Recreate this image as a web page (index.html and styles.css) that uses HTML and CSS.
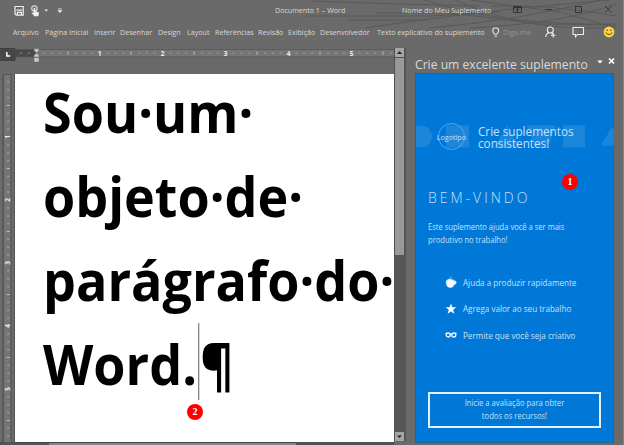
FILE: index.html
```html
<!DOCTYPE html>
<html lang="pt-BR">
<head>
<meta charset="utf-8">
<title>Documento 1 – Word</title>
<link rel="stylesheet" href="styles.css">
</head>
<body>
<div class="window">
  <header class="chrome">
    <svg class="swirl" width="624" height="48" viewBox="0 0 624 48">
      <g fill="none" stroke="#595959" stroke-width="1">
        <path d="M311 1L400 4L480 6"/><path d="M305 16H430L500 12"/><path d="M347 20L430 20"/>
        <path d="M365 28L420 20L520 8L610 0"/><path d="M376 13L450 13L540 24L616 25"/>
        <path d="M425 0Q500 26 616 24"/><path d="M455 0Q530 34 616 27"/><path d="M470 0L560 12L616 28"/>
        <path d="M430 28Q520 20 600 0"/><path d="M470 28Q560 24 616 4"/><path d="M490 6Q550 4 616 16"/>
      </g>
    </svg>
    <div class="titlebar">
      <div class="quick">
        <svg width="50" height="14" viewBox="0 0 50 14">
          <path d="M1 1.5h8.2v8.7H2.2L1 9z" fill="none" stroke="#f0f0f0" stroke-width="1.2"/>
          <path d="M2.5 5.2h5.6M3.4 10V7.4h4V10" fill="none" stroke="#f0f0f0" stroke-width="1.3"/>
          <circle cx="20.4" cy="3.6" r="2.7" fill="none" stroke="#d5d5d5" stroke-width="1.2"/>
          <path d="M19.6 3.2q.9-.9 1.7 0v3l3 .9q.8.4.6 1.4l-.6 2.8h-3.8l-2.9-3 .5-.7 1.5.6z" fill="#f0f0f0"/>
          <path d="M30.3 4.6h3.8l-1.9 2z" fill="#eee"/>
          <path d="M44 3.8h3.8M44 5.4h3.8l-1.9 2.2z" fill="#eee" stroke="#eee" stroke-width=".7"/>
        </svg>
      </div>
      <span class="label doc-name">Documento 1 – Word</span>
      <span class="label addin-name">Nome do Meu Suplemento</span>
      <svg class="controls" width="104" height="12" viewBox="0 0 104 12">
        <g fill="none" stroke="#353535" stroke-width="1">
          <path d="M.5 2.5h8v6h-8zM.5 3.5h8M4.500 8V5M3 6.2L4.500 4.900 6 6.200"/>
          <path d="M32 5.500h7M62.500 2.500h6v6h-6zM92 2l6.500 6.500M98.500 2L92 8.500"/>
        </g>
      </svg>
    </div>
    <nav class="tabs">
      <span class="label">Arquivo</span><span class="label">Página Inicial</span><span class="label up">Inserir</span><span class="label">Desenhar</span><span class="label">Design</span><span class="label">Layout</span><span class="label">Referências</span><span class="label">Revisão</span><span class="label">Exibição</span><span class="label up">Desenvolvedor</span><span class="label">Texto explicativo do suplemento</span>
      <svg width="8" height="11" viewBox="0 0 8 11"><path d="M2.500 7.200Q.8 5.200.8 3.700a2.900 2.900 0 0 1 5.800 0q0 1.500-1.700 3.500zM2.500 9.300h2.400" fill="none" stroke="#e4e4e4" stroke-width="1.100"/></svg>
      <span class="label tell">Diga-me</span>
      <svg width="12" height="13" viewBox="0 0 12 13"><g fill="none" stroke="#ececec" stroke-width="1.100"><circle cx="5.300" cy="4" r="3"/><path d="M.8 11Q1 7.300 4 6.800M6.500 7l1.800 1.200M8.200 7v4.500M6 9.300h4.600"/></g></svg>
      <svg width="13" height="12" viewBox="0 0 13 12"><path d="M1 1.500h10.500v7H5.500L3.500 10.800V8.500H1z" fill="none" stroke="#ececec" stroke-width="1.100"/></svg>
      <svg width="12" height="12" viewBox="0 0 12 12"><circle cx="6" cy="6" r="5.400" fill="#fbd63e"/><circle cx="4.200" cy="4.300" r=".8" fill="#554a20"/><circle cx="7.800" cy="4.300" r=".8" fill="#554a20"/><path d="M2.600 6.500Q6 10.500 9.400 6.500" fill="none" stroke="#554a20" stroke-width="1"/></svg>
    </nav>
  </header>

  <main class="work">
    <section class="editor">
      <svg class="ruler" width="394" height="26" viewBox="0 0 394 26">
        <defs>
          <pattern id="ticks" width="63" height="8" patternUnits="userSpaceOnUse" x="36.500" y="1">
            <path d="M7.400 4h1.200M15.200 4h1.200M23.100 4h1.200M39 4h1.200M46.800 4h1.200M54.700 4h1.200" stroke="#bdbdbd" stroke-width="1.200"/>
            <path d="M31.500 2.500v3.400" stroke="#c4c4c4" stroke-width=".9"/>
          </pattern>
        </defs>
        <path d="M0 .5h15v12H0" fill="#474747" stroke="#3e3e3e"/>
        <path d="M6.800 4v4h3.400" fill="none" stroke="#fff" stroke-width="1.500"/>
        <path d="M15 1h22v8H15z" fill="#494949"/>
        <path d="M37 1h358v8H37z" fill="#757575"/>
        <path d="M15 1.500h379M15 8.900h379" stroke="#555" stroke-width=".8"/>
        <path d="M15 1h380v8H15z" fill="url(#ticks)"/>
        <g class="num"><text x="99.500" y="7.700">1</text><text x="162.500" y="7.700">2</text><text x="225.500" y="7.700">3</text><text x="288.500" y="7.700">4</text><text x="351.500" y="7.700">5</text></g>
        <path d="M34 .8h5v1.600L36.500 5 34 2.400zM34 9V7.200L36.500 5 39 7.200V9zM34 9.600h5V14h-5z" fill="#c9c9c9" stroke="#666" stroke-width=".5"/>
      </svg>
      <div class="sheet-row">
        <svg class="vruler" width="15" height="371" viewBox="0 0 15 371">
          <defs>
            <pattern id="vticks" width="8" height="63" patternUnits="userSpaceOnUse" x="4" y="0">
              <path d="M3.500 7.900h1.200M3.500 15.800h1.200M3.500 23.600h1.200M3.500 39.400h1.200M3.500 47.300h1.200M3.500 55.100h1.200" stroke="#bdbdbd" stroke-width="1.200"/>
              <path d="M2.500 31.500h3.400" stroke="#c4c4c4" stroke-width=".9"/>
            </pattern>
          </defs>
          <path d="M2.500 0h9v371h-9z" fill="#555"/>
          <path d="M4 1h6.500v367H4z" fill="#757575"/>
          <path d="M4 3h7v365H4z" fill="url(#vticks)"/>
          <g class="num"><text transform="translate(10 63) rotate(-90)">1</text><text transform="translate(10 126) rotate(-90)">2</text><text transform="translate(10 189) rotate(-90)">3</text><text transform="translate(10 252) rotate(-90)">4</text><text transform="translate(10 315) rotate(-90)">5</text></g>
          <path d="M14.500 0v369" stroke="#555"/>
        </svg>
        <article class="page">
          <p class="line l1">Sou·um·</p>
          <p class="line l2">objeto·de·</p>
          <p class="line l3">parágrafo·do·</p>
          <p class="line l4">Word.<i class="caret"></i>¶</p>
          <span class="badge two">2</span>
        </article>
      </div>
      <div class="hscroll"><i></i></div>
    </section>
    <div class="vscroll">
      <span class="arrow"><svg width="9" height="9" viewBox="0 0 9 9"><path d="M2 6L4.500 3 7 6z" fill="#222"/></svg></span>
      <span class="thumb"></span>
      <span class="track"></span>
      <span class="arrow"><svg width="9" height="9" viewBox="0 0 9 9"><path d="M2 3.500h5L4.500 6z" fill="#222"/></svg></span>
    </div>
    <aside class="pane">
      <div class="pane-head">
        <h1>Crie um excelente suplemento</h1>
        <svg width="20" height="12" viewBox="0 0 20 12"><path d="M.3 3.500h5.400L3 6.500z" fill="#fff"/><path d="M12 1.500l5 5M17 1.500l-5 5" stroke="#fff" stroke-width="1.700"/></svg>
      </div>
      <div class="addin">
        <div class="brand">
          <svg class="shapes" width="198" height="28" viewBox="0 0 198 28">
            <g fill="#fff" fill-opacity=".11"><circle cx="5" cy="13.500" r="11"/><path d="M30 2.500h23v22H30zM78 24.500L91 2.500l13 22zM111 2.500h29l-8 22h-13zM147 2.500h22v22h-22zM185 22.500L196 4l13 18.500z"/></g>
          </svg>
          <div class="logo"><span>Logotipo</span></div>
          <h2><span>Crie suplementos</span><span>consistentes!</span></h2>
        </div>
        <span class="badge one">1</span>
        <h3>BEM-VINDO</h3>
        <p class="intro"><span>Este suplemento ajuda você a ser mais</span><span>produtivo no trabalho!</span></p>
        <ul class="perks">
          <li><svg width="12" height="12" viewBox="0 0 12 12"><path d="M6.500.5L4.500 3.200M1.700 4.400Q4 2.500 6 3.500L8.500 4v1h1.800q1 .2.900 1.500-.2 2-2.200 2.200Q8 11.500 5.800 11.500 1 11.500 1.200 6z" fill="#f2f8ff" stroke="#f2f8ff" stroke-width=".6"/></svg><span>Ajuda a produzir rapidamente</span></li>
          <li><svg width="12" height="12" viewBox="0 0 12 12"><path d="M6 .5l1.400 3.700h3.900L8.200 6.700l1.200 4L6 8.400l-3.400 2.300 1.200-4L.7 4.200h3.900z" fill="#fff"/></svg><span>Agrega valor ao seu trabalho</span></li>
          <li><svg width="12" height="12" viewBox="0 0 12 12"><g fill="none" stroke="#eef6ff" stroke-width="1.300"><circle cx="3.200" cy="6" r="2"/><circle cx="8.800" cy="6" r="2"/><path d="M4.800 4.800Q6 6 7.200 4.800M.5 4.400h2M9.500 4.400h2"/></g></svg><span>Permite que você seja criativo</span></li>
        </ul>
        <button><span>Inicie a avaliação para obter</span><span>todos os recursos!</span></button>
      </div>
    </aside>
  </main>
</div>
</body>
</html>
```
FILE: styles.css
```css
* { box-sizing: border-box; }
body, h1, h2, h3, p, ul { margin: 0; padding: 0; }
body { overflow: hidden; background: #6a6a6a; color: #d9d9d9; font-family: "Open Sans", "Noto Sans", sans-serif; }
svg { display: block; flex: none; }
.window { width: 624px; height: 445px; display: flex; flex-direction: column; border-right: 1px solid #858585; }

.chrome { position: relative; height: 48px; flex: none; }
.swirl { position: absolute; left: 0; top: 0; }
.label { display: block; font-size: 8px; line-height: 12px; white-space: nowrap; transform: scaleX(.89); transform-origin: 0 0; }
.titlebar { position: relative; display: grid; grid-template-columns: 261px 127px 111px 104px; height: 20px; padding: 4px 0 0 14px; }
.quick { padding-top: 1px; }
.controls { margin-left: 0; }
.tabs { position: relative; display: grid; grid-template-columns: 32px 48.500px 26.500px 38px 29px 27.500px 43.500px 30px 32px 57px 115px 11px 41.500px 27px 31px 12px; align-items: center; height: 24px; padding-left: 13px; }
.up { margin-top: -1px; }
.tell { color: #969696; }

.work { display: flex; height: 397px; }
.editor { width: 394px; flex: none; }
.num { font: bold 6.500px "Open Sans", sans-serif; fill: #eee; text-anchor: middle; }
.sheet-row { display: flex; height: 368px; }
.page { position: relative; width: 379px; height: 368px; padding-left: 28px; background: #fff; color: #000; }
.line { height: 84px; font-weight: 700; font-size: 56px; line-height: 84px; white-space: nowrap; transform: scaleX(.93); transform-origin: 0 0; }
.l1 { margin-top: -5px; }
.caret { display: inline-block; width: 1px; height: 77px; margin: 0 1px; background: #555; vertical-align: -15px; }
.badge { position: absolute; width: 16px; height: 16px; border-radius: 50%; background: #f00; color: #fff; font: bold 10px/15px "Liberation Serif", serif; text-align: center; }
.two { left: 172px; top: 330px; }
.hscroll { height: 3px; padding-left: 2px; background: #505050; }
.hscroll i { display: block; width: 294px; height: 3px; border-top: 1px solid #454545; background: linear-gradient(90deg, #555 47px, #858585 47px); }

.vscroll { display: flex; flex-direction: column; width: 12px; height: 393px; padding-left: 1px; border-right: 2px solid #555; background: #505050; }
.arrow { width: 9px; height: 9px; background: #a5a5a5; }
.thumb { height: 197px; margin-top: 1px; background: #999; }
.track { flex: 1; background: #565656; }

.pane { width: 199px; margin-left: 9px; }
.pane-head { display: flex; height: 25px; padding-top: 5px; }
.pane-head h1 { width: 182px; font-size: 13.500px; line-height: 22px; font-weight: 400; white-space: nowrap; transform: scaleX(.9); transform-origin: 0 0; }
.pane-head svg { margin-top: 4px; }
.addin { position: relative; width: 199px; height: 370px; border: 1px solid #2d5f90; background: #0078d7; color: #c4e0f8; }
.brand { position: relative; display: flex; align-items: center; height: 34px; margin-top: 46px; padding-left: 22px; }
.shapes { position: absolute; left: 0; top: 3px; }
.logo { position: relative; display: flex; align-items: center; justify-content: center; width: 27px; height: 27px; border: 1px solid #5ba7e6; border-radius: 50%; font-size: 8px; margin-bottom: 1px; }
.logo span { transform: scaleX(.9); }
.brand h2 { position: relative; margin-left: 13px; font-size: 13px; line-height: 12.500px; font-weight: 400; white-space: nowrap; transform: scaleX(.9); transform-origin: 0 0; }
.brand h2 span, .intro span, button span { display: block; }
.one { left: 146px; top: 100px; }
.addin h3 { margin: 34px 0 0 12px; font: 300 14px/20px "Open Sans", sans-serif; letter-spacing: 3px; }
.intro { margin: 13px 0 0 12px; font-size: 8.500px; line-height: 12.500px; white-space: nowrap; transform: scaleX(.89); transform-origin: 0 0; }
.perks { margin: 23px 0 0 29px; list-style: none; }
.perks li { display: flex; gap: 6px; align-items: center; height: 26.500px; font-size: 9px; white-space: nowrap; }
.perks span { transform: scaleX(.9); transform-origin: 0 0; }
.addin button { display: block; width: 173px; height: 36px; margin: 43px 0 0 12px; padding: 0; border: 2px solid #e3f1fd; background: transparent; color: #c4e0f8; font: 8.500px/12.500px "Open Sans", sans-serif; white-space: nowrap; }
.addin button span { transform: scaleX(.9); }
```
